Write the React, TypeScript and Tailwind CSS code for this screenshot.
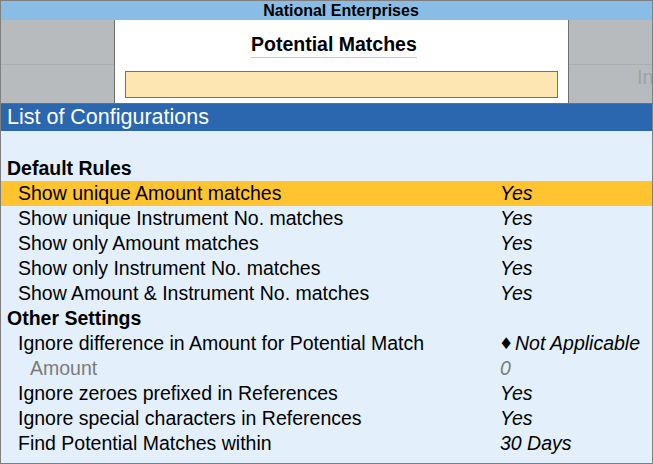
import React from 'react';

type Row = {
  label: string;
  value?: string;
  kind?: 'section' | 'item' | 'sub' | 'blank';
  active?: boolean;
  diamond?: boolean;
};

const rows: Row[] = [
  { label: '', kind: 'blank' },
  { label: 'Default Rules', kind: 'section' },
  { label: 'Show unique Amount matches', value: 'Yes', active: true },
  { label: 'Show unique Instrument No. matches', value: 'Yes' },
  { label: 'Show only Amount matches', value: 'Yes' },
  { label: 'Show only Instrument No. matches', value: 'Yes' },
  { label: 'Show Amount & Instrument No. matches', value: 'Yes' },
  { label: 'Other Settings', kind: 'section' },
  { label: 'Ignore difference in Amount for Potential Match', value: 'Not Applicable', diamond: true },
  { label: 'Amount', value: '0', kind: 'sub' },
  { label: 'Ignore zeroes prefixed in References', value: 'Yes' },
  { label: 'Ignore special characters in References', value: 'Yes' },
  { label: 'Find Potential Matches within', value: '30 Days' },
];

function ConfigRow({ row }: { row: Row }) {
  const kind = row.kind ?? 'item';

  if (kind === 'blank') return <div className="h-[25px]" />;

  if (kind === 'section') {
    return (
      <div className="h-[25px] flex items-center pl-[6px] font-bold text-black">
        {row.label}
      </div>
    );
  }

  const sub = kind === 'sub';
  return (
    <div
      className={`h-[25px] grid grid-cols-[499px_1fr] items-center ${
        row.active ? 'bg-[#FFC430]' : ''
      } ${sub ? 'text-[#7b7b7b]' : 'text-black'}`}
    >
      <div className={sub ? 'pl-[29px]' : 'pl-[17px]'}>{row.label}</div>
      <div className="italic whitespace-nowrap flex items-center">
        {row.diamond && (
          <span className="not-italic inline-block w-[16px] -ml-[1px] text-[16px] font-['DejaVu_Sans']">
            ♦
          </span>
        )}
        {row.value}
      </div>
    </div>
  );
}

export default function App() {
  return (
    <div className="w-[653px] h-[464px] border border-[#7f7f7f] bg-[#E3F0FB] overflow-hidden font-['Liberation_Sans',Arial,sans-serif] text-[19.5px] leading-none">
      {/* Company header */}
      <div className="h-[19px] bg-[#8ABDE6] flex items-center justify-center pl-[29px] font-bold text-[16px] text-black">
        National Enterprises
      </div>

      {/* Background form + popup */}
      <div className="h-[84px] flex border-b border-[#6f6f6f]">
        <div className="w-[113px] flex flex-col">
          <div className="h-[44px] bg-[#B7BBBE]" />
          <div className="h-px bg-[#ABAFB2]" />
          <div className="flex-1 bg-[#B7BBBE]" />
        </div>

        <div className="w-[455px] bg-white border-x border-[#6f6f6f] flex flex-col items-start pt-[13px]">
          <div className="ml-[136px] font-bold text-black leading-[22px] pb-[2px] border-b border-[#c9c9c9]">
            Potential Matches
          </div>
          <div className="mt-[13px] ml-[10px] w-[433px] h-[27px] bg-[#FEE6B3] border border-[#1E8ACB]" />
        </div>

        <div className="flex-1 flex flex-col relative">
          <div className="h-[44px] bg-[#B7BBBE]" />
          <div className="h-px bg-[#ABAFB2]" />
          <div className="flex-1 bg-[#B7BBBE]" />
          <span className="absolute left-[68px] top-[47px] text-[20px] text-[#9EA2A6] whitespace-nowrap">
            In
          </span>
        </div>
      </div>

      {/* List title */}
      <div className="h-[27px] bg-[#2A67AE] text-white text-[21.5px] flex items-center pl-[6px]">
        List of Configurations
      </div>

      {/* Rows */}
      <div>
        {rows.map((row, i) => (
          <ConfigRow key={i} row={row} />
        ))}
      </div>
    </div>
  );
}
